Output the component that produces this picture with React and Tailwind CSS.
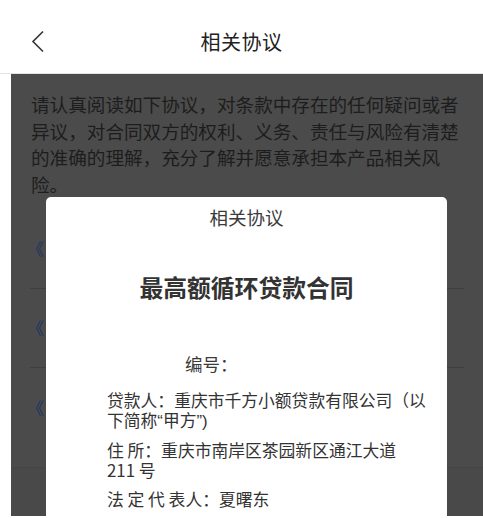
const FONT = { fontFamily: '"Noto Sans CJK SC", "Noto Sans", sans-serif' };

const LINKS = [0, 1, 2];

function Q({ children }) {
  return <span className="font-['Liberation_Sans']">{children}</span>;
}

export default function App() {
  return (
    <div className="relative w-[483px] h-[518px] overflow-hidden bg-white [text-spacing-trim:space-all]" style={FONT}>
      <header className="relative flex h-[74px] items-center justify-center pt-[11px] border-b border-[#e4e4e4]">
        <button className="absolute left-[31px] top-[30px] text-[#333]">
          <svg width="13" height="23" viewBox="0 0 13 23" fill="none">
            <path d="M12 1.5L2 11.5L12 21.5" stroke="currentColor" strokeWidth="1.6" />
          </svg>
        </button>
        <h1 className="text-[20px] text-[#222] tracking-[0.5px]">相关协议</h1>
      </header>

      <div className="relative ml-[11px] h-[442px] bg-[#4b4b4b]">
        <p className="px-[20px] pt-[17px] text-[18.6px] leading-[26.5px] text-[#1d1d1d]">
          请认真阅读如下协议，对条款中存在的任何疑问或者异议，对合同双方的权利、义务、责任与风险有清楚的准确的理解，充分了解并愿意承担本产品相关风险。
        </p>

        <ul className="mt-[13px] mx-[19px]">
          {LINKS.map((i) => (
            <li
              key={i}
              className={`flex h-[79px] items-center text-[17px] text-[#163766] ${i < 2 ? 'border-b border-[#3f3f3f]' : ''}`}
            >
              <span className="-ml-[3px]">《</span>
            </li>
          ))}
        </ul>
        <div className="absolute left-0 right-0 bottom-0 h-[49px] border-t border-[#454545] bg-[#494949]" />

        <div className="absolute left-[35px] top-[123px] bottom-0 w-[401px] rounded-t-[5px] bg-white">
          <div className="pt-[7px] text-center text-[18.5px] text-[#3a3a3a]">相关协议</div>
          <div className="mt-[37px] text-center text-[23.8px] font-bold text-[#333]">最高额循环贷款合同</div>
          <div className="mt-[47px] pl-[139px] text-[17.5px] text-[#3a3a3a]">编号：</div>
          <div className="mt-[12px] pl-[61px] pr-[18px] text-[16.8px] leading-[20px] text-[#333]">
            <p>
              贷款人：重庆市千方小额贷款有限公司（以
              <br />
              下简称<Q>“</Q>甲方<Q>”)</Q>
            </p>
            <p className="mt-[8px]">
              住 所：重庆市南岸区茶园新区通江大道
              <br />
              211 号
            </p>
            <p className="mt-[9px]">法 定 代 表人：夏曙东</p>
          </div>
        </div>
      </div>
    </div>
  );
}
